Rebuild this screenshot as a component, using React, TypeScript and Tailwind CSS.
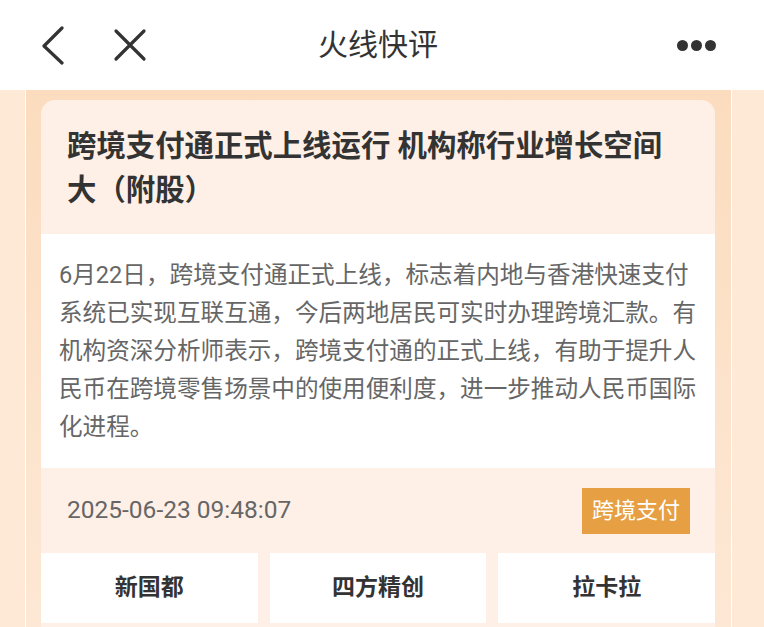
const cjk = { fontFamily: 'Roboto, "Noto Sans CJK SC", sans-serif' };

const stocks = ["新国都", "四方精创", "拉卡拉"];

export default function App() {
  return (
    <div className="w-[764px] h-[627px] overflow-hidden bg-white" style={cjk}>
      {/* 顶部导航 */}
      <div className="h-[90px] bg-white flex items-center">
        <div className="w-[160px] flex items-center pl-[40px] gap-[48px]">
          <svg width="24" height="40" viewBox="0 0 24 40" fill="none">
            <path d="M22 3 L4 21 L22 38" stroke="#333" strokeWidth="3.2" strokeLinecap="round" strokeLinejoin="round" />
          </svg>
          <svg width="36" height="34" viewBox="0 0 36 34" fill="none">
            <path d="M4 3 L32 31 M32 3 L4 31" stroke="#333" strokeWidth="3.2" strokeLinecap="round" />
          </svg>
        </div>
        <div className="flex-1 text-center text-[30px] text-[#333] pr-[8px] leading-none">火线快评</div>
        <div className="w-[160px] flex items-center justify-end pr-[48px] gap-[3px]">
          <span className="w-[11px] h-[11px] rounded-full bg-[#333]" />
          <span className="w-[11px] h-[11px] rounded-full bg-[#333]" />
          <span className="w-[11px] h-[11px] rounded-full bg-[#333]" />
        </div>
      </div>

      {/* 内容区 */}
      <div className="flex h-[537px]">
        <div className="w-[25px] bg-[#fde9d6]" />
        <div className="w-[1px] bg-white" />
        <div className="w-[705px] bg-gradient-to-b from-[#fbdcbe] to-[#fde8d5] pt-[10px] pl-[15px]">
          <div className="w-[674px] rounded-[14px] bg-[#fef0e6] overflow-hidden">
            <div className="px-[26px] pt-[24px] pb-[22px] text-[29.4px] leading-[44px] font-bold text-[#333]">
              跨境支付通正式上线运行 机构称行业增长空间
              <br />
              大（附股）
            </div>
            <div className="bg-white px-[18px] py-[22px] text-[23.6px] leading-[38px] text-[#666] whitespace-nowrap">
              6月22日，跨境支付通正式上线，标志着内地与香港快速支付
              <br />
              系统已实现互联互通，今后两地居民可实时办理跨境汇款。有
              <br />
              机构资深分析师表示，跨境支付通的正式上线，有助于提升人
              <br />
              民币在跨境零售场景中的使用便利度，进一步推动人民币国际
              <br />
              化进程。
            </div>
            <div className="h-[85px] flex items-center justify-between pl-[26px] pr-[25px]">
              <span className="text-[24.5px] text-[#666]">2025-06-23 09:48:07</span>
              <span className="bg-[#e79f43] text-white text-[22px] h-[46px] px-[10px] flex items-center">跨境支付</span>
            </div>
            <div className="grid grid-cols-3 gap-[12px]">
              {stocks.map((s) => (
                <div key={s} className="h-[70px] bg-white flex items-center justify-center text-[23px] font-bold text-[#333]">
                  {s}
                </div>
              ))}
            </div>
            <div className="h-[20px]" />
          </div>
        </div>
        <div className="w-[1px] bg-white" />
        <div className="flex-1 bg-[#fde9d6]" />
      </div>
    </div>
  );
}
